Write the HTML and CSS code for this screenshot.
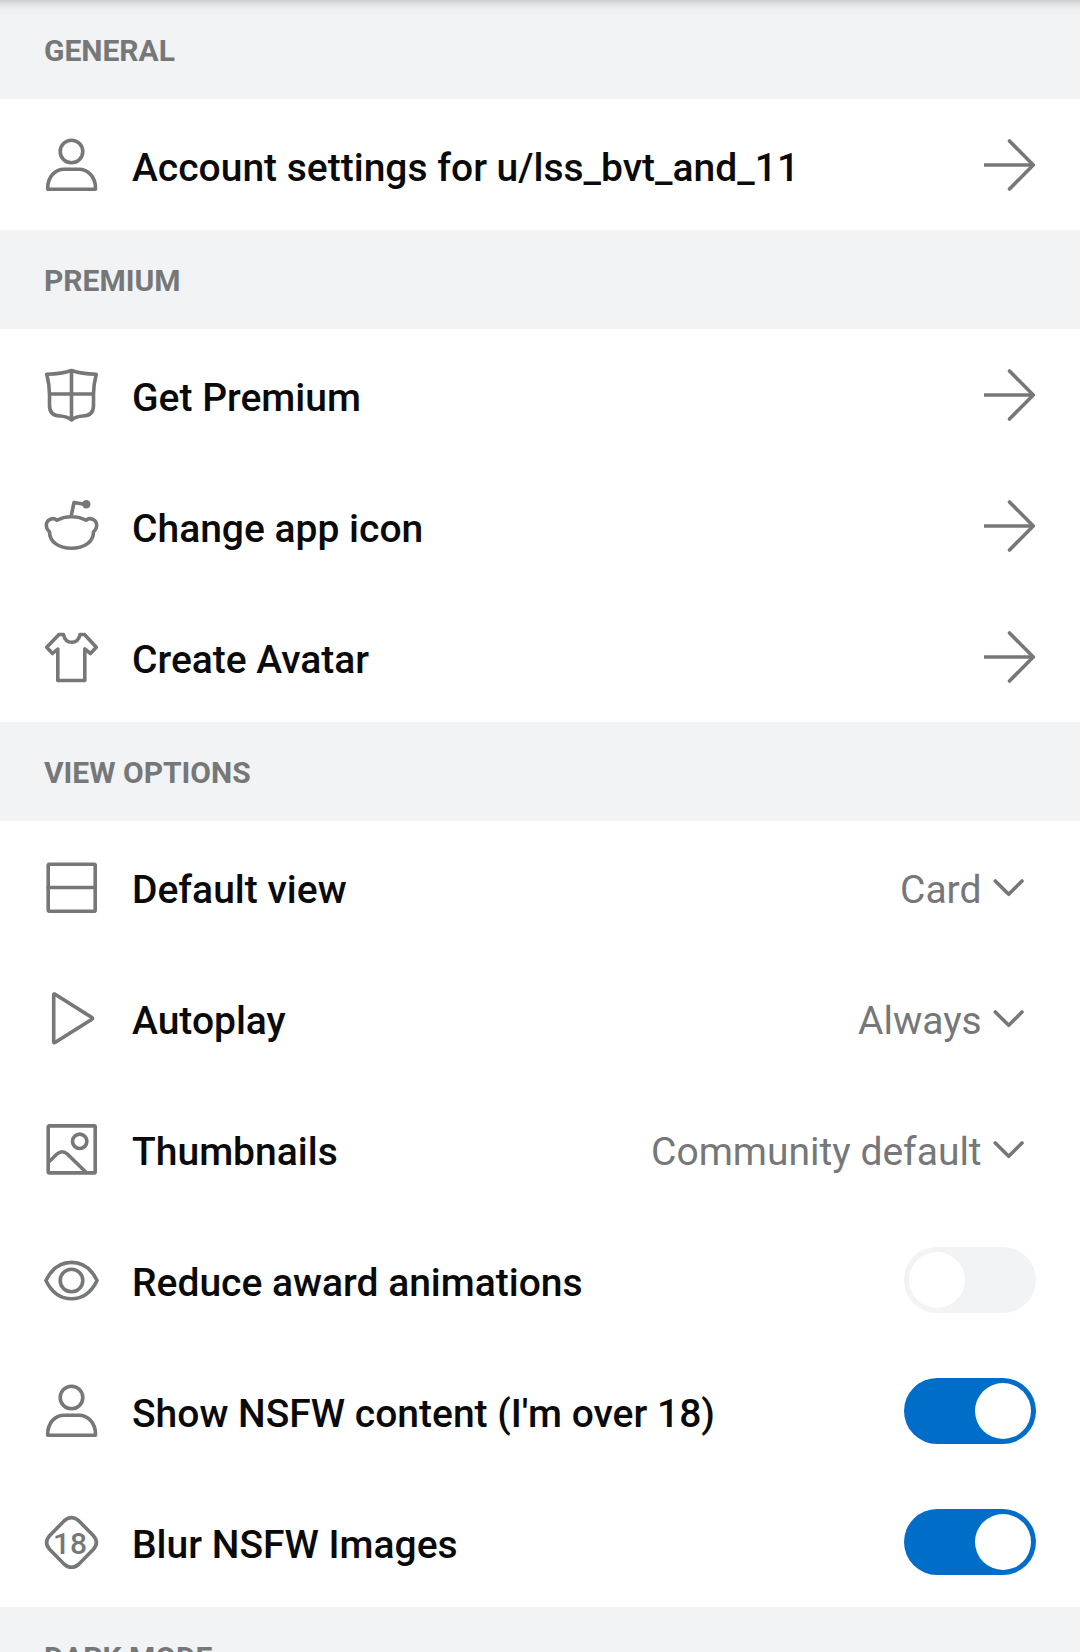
FILE: index.html
```html
<!DOCTYPE html>
<html lang="en">
<head>
<meta charset="utf-8">
<meta name="viewport" content="width=device-width, initial-scale=1">
<title>Settings</title>
<link rel="stylesheet" href="styles.css">
</head>
<body>
<svg class="sprite" aria-hidden="true">
  <symbol id="user" viewBox="0 0 55 55"><circle cx="27.5" cy="14.5" r="11.3"/><path d="M3.7 51C3.7 40 11 32.2 20 32.2H35C44 32.2 51.5 40 51.5 51V52.3H3.7Z"/></symbol>
  <symbol id="shield" viewBox="0 0 55 55"><path d="M2.8 7.2Q18 7 27.5 3.5Q37 7 52.2 7.2Q49.5 18 49.5 27V38.5Q49.5 48.7 39 49Q32 49.3 27.5 53Q23 49.3 16 49Q5.5 48.7 5.5 38.5V27Q5.5 18 2.8 7.2ZM27.5 3.5V53M5.5 27H49.5"/></symbol>
  <symbol id="alien" viewBox="0 0 55 55"><path d="M13 22.3C21 17.5 34 17.5 42 22.3C46 18.8 52.7 21.5 52.7 27.5C52.7 31 50.5 32.5 49.5 34C49.5 44 40 50.3 27.5 50.3C15 50.3 5.5 44 5.5 34C4.5 32.5 2.3 31 2.3 27.5C2.3 21.5 9 18.8 13 22.3ZM27.3 17.5L30 4.5L42 6.5"/><circle class="solid" cx="42.3" cy="6.3" r="4.2"/></symbol>
  <symbol id="shirt" viewBox="0 0 55 55"><path d="M15 5.5H19.5C20.5 10.5 23 13.3 27.7 13.3C32.3 13.3 35 10.5 36 5.5H40.5L52.3 18.2L46.5 24.5L40.8 20V51.5H13.8V20L8.5 24.5L2.7 18.2Z"/></symbol>
  <symbol id="card" viewBox="0 0 55 55"><rect x="4.2" y="5.2" width="47" height="47" rx="1"/><path d="M4.2 28.5H51.2"/></symbol>
  <symbol id="play" viewBox="0 0 55 55"><path d="M9.7 4.8Q9.7 3.5 11 4.2L48 27.6Q49 28.4 48 29.2L11 52.5Q9.7 53.2 9.7 52Z"/></symbol>
  <symbol id="image" viewBox="0 0 55 55"><rect x="4.2" y="4.9" width="47" height="47" rx="1"/><circle cx="35.7" cy="20.3" r="7.2"/><path d="M5 40.7L13 33Q18.3 28.5 23.3 33L42 51.3"/></symbol>
  <symbol id="eye" viewBox="0 0 55 55"><path d="M1.9 28.5C8 16 17 10.4 27.5 10.4C38 10.4 47 16 53.1 28.5C47 41 38 46.8 27.5 46.8C17 46.8 8 41 1.9 28.5Z"/><circle cx="27.5" cy="28.5" r="11.3"/></symbol>
  <symbol id="arrow" viewBox="0 0 55 55"><path class="flat" d="M3 28H52"/><path d="M28.5 4L52.3 28L28.5 52"/></symbol>
  <symbol id="chevron" viewBox="0 0 55 55"><path d="M14.3 22L27.7 35.3L41 22"/></symbol>
</svg>

<main class="settings">
  <section>
    <h2 class="heading">GENERAL</h2>
    <a class="row" href="#account"><svg class="icon" aria-hidden="true"><use href="#user"/></svg><span class="title">Account settings for u/lss_bvt_and_11</span><svg class="icon" aria-hidden="true"><use href="#arrow"/></svg></a>
  </section>
  <section>
    <h2 class="heading">PREMIUM</h2>
    <a class="row" href="#premium"><svg class="icon" aria-hidden="true"><use href="#shield"/></svg><span class="title">Get Premium</span><svg class="icon" aria-hidden="true"><use href="#arrow"/></svg></a>
    <a class="row" href="#app-icon"><svg class="icon" aria-hidden="true"><use href="#alien"/></svg><span class="title">Change app icon</span><svg class="icon" aria-hidden="true"><use href="#arrow"/></svg></a>
    <a class="row" href="#avatar"><svg class="icon" aria-hidden="true"><use href="#shirt"/></svg><span class="title">Create Avatar</span><svg class="icon" aria-hidden="true"><use href="#arrow"/></svg></a>
  </section>
  <section>
    <h2 class="heading">VIEW OPTIONS</h2>
    <div class="row">
      <svg class="icon" aria-hidden="true"><use href="#card"/></svg>
      <label class="title" for="view">Default view</label>
      <span class="picker"><select id="view"><option>Card</option></select><svg class="icon" aria-hidden="true"><use href="#chevron"/></svg></span>
    </div>
    <div class="row">
      <svg class="icon" aria-hidden="true"><use href="#play"/></svg>
      <label class="title" for="autoplay">Autoplay</label>
      <span class="picker"><select id="autoplay"><option>Always</option></select><svg class="icon" aria-hidden="true"><use href="#chevron"/></svg></span>
    </div>
    <div class="row">
      <svg class="icon" aria-hidden="true"><use href="#image"/></svg>
      <label class="title" for="thumbnails">Thumbnails</label>
      <span class="picker"><select id="thumbnails"><option>Community default</option></select><svg class="icon" aria-hidden="true"><use href="#chevron"/></svg></span>
    </div>
    <div class="row">
      <svg class="icon" aria-hidden="true"><use href="#eye"/></svg>
      <label class="title" for="reduce">Reduce award animations</label>
      <input class="switch" type="checkbox" role="switch" id="reduce">
    </div>
    <div class="row">
      <svg class="icon" aria-hidden="true"><use href="#user"/></svg>
      <label class="title" for="nsfw">Show NSFW content (I'm over 18)</label>
      <input class="switch" type="checkbox" role="switch" id="nsfw" checked>
    </div>
    <div class="row">
      <svg class="icon" viewBox="0 0 55 55" aria-hidden="true"><path d="M20.5 6.5Q27.5 .6 34.5 6.5L49.2 21.5Q55.6 28.5 49.2 35.5L34.5 50.5Q27.5 56.4 20.5 50.5L5.8 35.5Q-.6 28.5 5.8 21.5Z"/><text x="26" y="40">18</text></svg>
      <label class="title" for="blur">Blur NSFW Images</label>
      <input class="switch" type="checkbox" role="switch" id="blur" checked>
    </div>
  </section>
  <section>
    <h2 class="heading">DARK MODE</h2>
  </section>
</main>
</body>
</html>
```
FILE: styles.css
```css
* {
  box-sizing: border-box;
}

body {
  margin: 0;
  background: #fff;
  color: #0a0a0a;
  font-family: Roboto, sans-serif;
}

.sprite {
  position: absolute;
  width: 0;
  height: 0;
}

.settings {
  height: 100vh;
  overflow-y: auto;
  scrollbar-width: none;
}

/* Shadow cast by the app bar on the scrolling list */
.settings::before {
  content: "";
  position: absolute;
  top: 0;
  left: 0;
  right: 0;
  height: 16px;
  background: linear-gradient(rgba(0, 0, 0, 0.16), rgba(0, 0, 0, 0.07) 25%, rgba(0, 0, 0, 0.02) 60%, transparent);
  pointer-events: none;
}

.heading {
  margin: 0;
  padding: 33px 44px 30px;
  background: #f1f3f5;
  color: #757779;
  font-size: 30px;
  font-weight: 700;
  line-height: 36px;
}

.row {
  display: flex;
  align-items: center;
  min-height: 131px;
  padding: 0 44px;
  color: inherit;
  text-decoration: none;
}

.icon {
  flex: none;
  width: 55px;
  height: 55px;
  fill: none;
  stroke: #757779;
  stroke-width: 3.6;
  stroke-linecap: round;
  stroke-linejoin: round;
}

.flat {
  stroke-linecap: butt;
}

.solid {
  fill: #757779;
  stroke: none;
}

.icon text {
  fill: #757779;
  stroke: none;
  font: 500 30px Roboto, sans-serif;
  text-anchor: middle;
}

.title {
  flex: 1;
  padding: 6px 0 0 33px;
  font-size: 39px;
  font-weight: 500;
  line-height: 46px;
}

.picker {
  display: grid;
  grid-template-columns: auto 55px;
  align-items: center;
}

.picker select {
  grid-area: 1 / 1 / 2 / 3;
  margin: 0;
  padding: 6px 54px 0 0;
  border: 0;
  background: none;
  color: #757779;
  font: 400 39px/46px Roboto, sans-serif;
  appearance: none;
}

.picker .icon {
  grid-area: 1 / 2;
  pointer-events: none;
}

.switch {
  flex: none;
  display: flex;
  align-items: center;
  width: 132px;
  height: 66px;
  margin: 0;
  padding: 5px;
  border-radius: 33px;
  background: #f1f3f5;
  appearance: none;
}

.switch::before {
  content: "";
  width: 56px;
  height: 56px;
  border-radius: 50%;
  background: #fff;
}

.switch:checked {
  justify-content: flex-end;
  background: #006dc9;
}
```
